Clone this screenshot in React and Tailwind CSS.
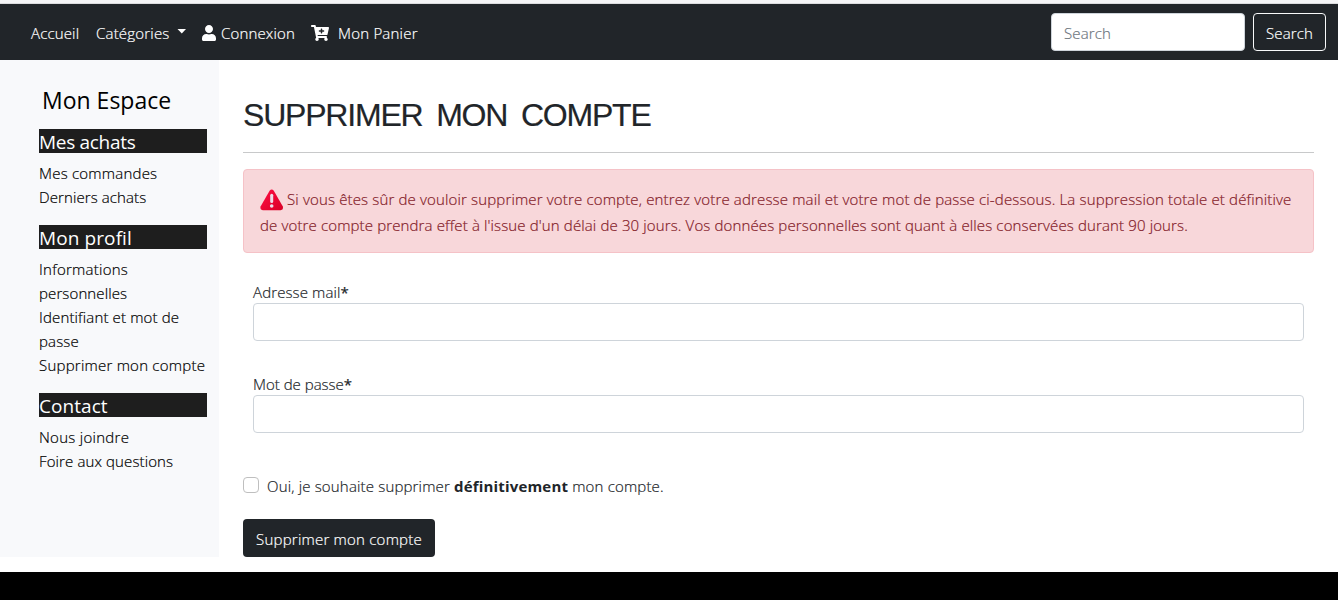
import React from "react";
import { FaUser, FaCartPlus } from "react-icons/fa";

function SideSection({ title, titleClass, children }) {
  return (
    <section className="mb-4 flex flex-col">
      <h2 className={"mb-2 h-6 bg-[#1e1e1e] text-[19px] font-normal leading-[26px] text-white [-webkit-text-stroke:0px] " + titleClass}>{title}</h2>
      <ul className="flex flex-col leading-6">{children}</ul>
    </section>
  );
}

function WarningIcon() {
  return (
    <svg viewBox="0 0 24 22" className="mr-[3px] inline-block h-[22px] w-6 align-[-6px]">
      <defs>
        <linearGradient id="warn" x1="0" y1="0" x2="1" y2="1">
          <stop offset="0" stopColor="#ff0f45" />
          <stop offset="1" stopColor="#d90026" />
        </linearGradient>
      </defs>
      <path d="M9.6 1.7Q11.7-.6 13.8 1.7L22.7 17.3Q23.9 20.9 20.6 21.2H2.8Q-.5 20.9.7 17.3Z" fill="url(#warn)" />
      <path d="M11.7 6.2V12.6" stroke="#ecdfea" strokeWidth="3" strokeLinecap="round" />
      <circle cx="11.7" cy="17" r="1.8" fill="#ecdfea" />
    </svg>
  );
}

function Field({ label, id, type, labelClass }) {
  return (
    <div className="flex flex-col">
      <label htmlFor={id} className={"h-[23px] leading-6 " + labelClass}>
        {label}<span className="font-normal">*</span>
      </label>
      <input id={id} type={type} className="h-[38px] w-full rounded border border-[#ced4da] bg-white px-3 outline-none" />
    </div>
  );
}

export default function App() {
  return (
    <div className="flex h-[600px] w-full flex-col overflow-hidden bg-white font-['Open_Sans',sans-serif] text-[15px] font-light text-[#212529] [-webkit-text-stroke:0.2px]">
      <div className="h-1 shrink-0 border-b border-[#dcdcde] bg-[#f5f5f6]" />
      <nav className="flex h-14 shrink-0 items-center bg-[#212529] pr-3 pl-[31px] text-white">
        <div className="flex flex-1 items-center leading-6">
          <a className="w-[65px] pt-0.5 tracking-[0.15px] whitespace-nowrap">Accueil</a>
          <a className="flex w-[106px] items-center whitespace-nowrap">
            <span className="pt-0.5 tracking-[0.2px]">Catégories</span>
            <svg viewBox="0 0 10 5" className="mb-px ml-[7px] h-[5px] w-[10px]" fill="currentColor"><path d="M.5 0H9L4.8 4.5Z" /></svg>
          </a>
          <a className="flex w-[109px] items-center whitespace-nowrap">
            <FaUser className="mt-0.5 mr-[5px] h-4 w-[14px]" />
            <span className="pt-0.5 tracking-[0.15px]">Connexion</span>
          </a>
          <a className="flex items-center whitespace-nowrap">
            <FaCartPlus className="mt-0.5 mr-[9px] h-4 w-[18px]" />
            <span className="pt-0.5 tracking-[0.22px]">Mon Panier</span>
          </a>
        </div>
        <form className="flex gap-2">
          <input placeholder="Search" className="h-[38px] w-[194px] rounded border border-[#ced4da] bg-white px-3 pt-0.5 tracking-[0.15px] outline-none placeholder:text-[#6c757d]" />
          <button type="button" className="h-[38px] w-[73px] rounded border border-[#f8f9fa] pt-0.5 tracking-[0.15px]">Search</button>
        </form>
      </nav>
      <div className="flex h-[512px] shrink-0 items-start">
        <aside className="flex h-[497px] w-[219px] shrink-0 flex-col bg-[#f8f9fb] pr-3 pl-[39px] text-black">
          <h1 className="mt-[22px] mb-[11px] h-9 pl-[3px] text-[23px] font-normal leading-9 [-webkit-text-stroke:0px]">Mon Espace</h1>
          <SideSection title="Mes achats" titleClass="tracking-[-0.3px]">
            <li className="tracking-[0.22px]">Mes commandes</li>
            <li className="tracking-[0.1px]">Derniers achats</li>
          </SideSection>
          <SideSection title="Mon profil" titleClass="tracking-[0.1px]">
            <li><span className="tracking-[0.25px]">Informations</span><br /><span className="tracking-[0.12px]">personnelles</span></li>
            <li className="tracking-[0.15px]">Identifiant et mot de<br />passe</li>
            <li className="tracking-[0.23px] whitespace-nowrap">Supprimer mon compte</li>
          </SideSection>
          <SideSection title="Contact" titleClass="tracking-[0.05px]">
            <li className="tracking-[0.28px]">Nous joindre</li>
            <li className="tracking-[0.12px]">Foire aux questions</li>
          </SideSection>
        </aside>
        <main className="flex flex-1 flex-col items-stretch pr-6 pl-6">
          <h1 className="mt-9 h-[57px] border-b border-[#c8c9ca] font-['Liberation_Sans',sans-serif] text-[32px] font-normal leading-[38px] tracking-[-1.2px] whitespace-nowrap [word-spacing:6px]">SUPPRIMER MON COMPTE</h1>
          <div className="mt-4 h-[84px] rounded border border-[#f5c2c7] bg-[#f8d7da] px-4 pt-4 leading-[26px] whitespace-nowrap text-[#842029]">
            <p className="h-[26px]"><WarningIcon /><span className="tracking-[0.155px]">Si vous êtes sûr de vouloir supprimer votre compte, entrez votre adresse mail et votre mot de passe ci-dessous. La suppression totale et définitive</span></p>
            <p className="tracking-[0.135px]">de votre compte prendra effet à l'issue d'un délai de 30 jours. Vos données personnelles sont quant à elles conservées durant 90 jours.</p>
          </div>
          <form className="flex flex-col items-start">
            <div className="mt-[27px] flex w-full flex-col gap-[31px] px-[10px]">
              <Field id="mail" type="email" label="Adresse mail" labelClass="tracking-[0.12px]" />
              <Field id="password" type="password" label="Mot de passe" labelClass="" />
            </div>
            <label className="mt-[41px] flex h-6 items-center leading-6 whitespace-nowrap">
              <input type="checkbox" className="mr-2 mb-[3px] h-4 w-4 appearance-none rounded border border-[#bfbfbf] bg-white" />
              <span className="tracking-[0.17px]">Oui, je souhaite supprimer <b className="font-bold [-webkit-text-stroke:0px]">définitivement</b> mon compte.</span>
            </label>
            <button type="button" className="mt-[21px] h-[38px] w-48 rounded bg-[#212529] pt-0.5 tracking-[0.22px] whitespace-nowrap text-white">Supprimer mon compte</button>
          </form>
        </main>
      </div>
      <footer className="flex-1 bg-black" />
    </div>
  );
}
